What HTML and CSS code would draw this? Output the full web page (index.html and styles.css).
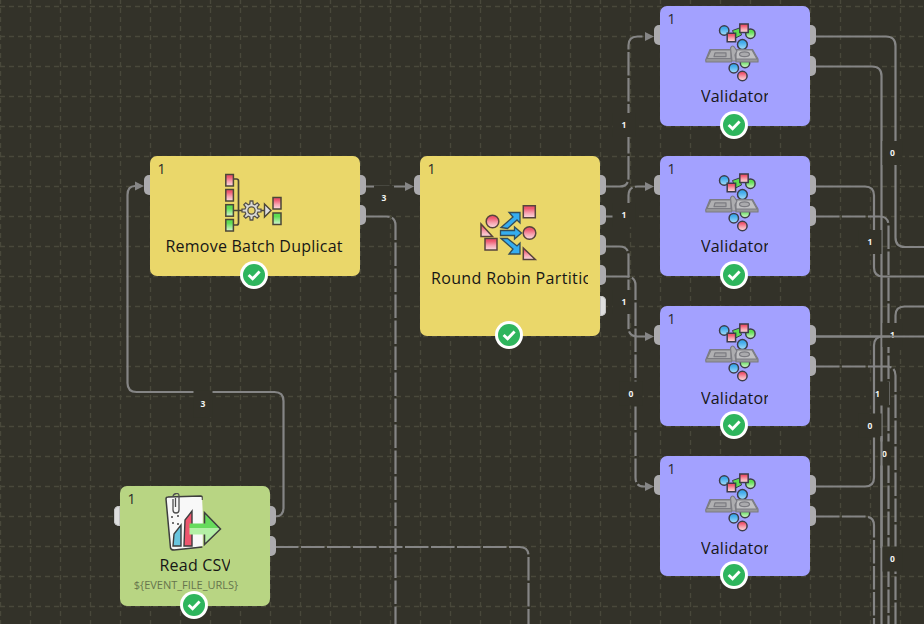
FILE: index.html
```
<!DOCTYPE html>
<html lang="en">
<head>
<meta charset="utf-8">
<title>Data flow graph</title>
<link rel="stylesheet" href="styles.css">
</head>
<body>
<main class="canvas" id="canvas">
<svg class="defs" width="0" height="0" aria-hidden="true">
<defs>
<linearGradient id="red" x2="0" y2="1"><stop offset=".2" stop-color="#ee566e"/><stop offset=".6" stop-color="#f7a3b0"/><stop offset="1" stop-color="#fbdde0"/></linearGradient>
<linearGradient id="green" x2="0" y2="1"><stop offset=".3" stop-color="#5ddd52"/><stop offset="1" stop-color="#d8f5d4"/></linearGradient>
<linearGradient id="blue" x2="0" y2="1"><stop offset=".25" stop-color="#3ea9ea"/><stop offset="1" stop-color="#a5defa"/></linearGradient>
<linearGradient id="arrow" x2="0" y2="1"><stop offset=".5" stop-color="#67db5c"/><stop offset=".5" stop-color="#b4f0a6"/></linearGradient>
<marker id="head" markerUnits="userSpaceOnUse" markerWidth="10" markerHeight="10" refX="0" refY="5" orient="auto"><path d="M0 .5L9 5L0 9.500z" fill="#858585"/></marker>
</defs>
<symbol id="validate" viewBox="0 0 54 60">
<g stroke="#3d3d48" stroke-width="1.5">
<circle cx="19.2" cy="8.500" r="4.700" fill="url(#blue)"/><path d="M27.500 8.500l7-2.500 2 7-6 3z" fill="#5ddd52" stroke-width="1"/><circle cx="45.400" cy="11.700" r="4.700" fill="url(#green)"/>
<path d="M34.800 2h8.400v8.400h-8.400z" fill="url(#red)"/><path d="M22.200 11.300h8.400v8.400h-8.400z" fill="url(#red)"/>
<circle cx="37.400" cy="22.500" r="4.900" fill="url(#blue)"/><circle cx="40" cy="41" r="4.700" fill="url(#green)"/><circle cx="28.800" cy="46.200" r="4.700" fill="url(#blue)"/><circle cx="37.400" cy="54" r="4.700" fill="url(#red)"/></g>
<g stroke="#7c7c82" stroke-width="1.200" stroke-linejoin="round"><path d="M5 27.500h21.500V40H1l-.3-2z" fill="#97979a"/><path d="M6 28h20v8.500H2z" fill="#b0b0b2"/><path d="M10 30.800h11v3.800H9z" fill="#a4a4a6"/><path d="M30 27.500h17.500L53 37v3H31z" fill="#97979a"/><path d="M31 28h16l5 9H31z" fill="#c0c0c2"/><ellipse cx="39.500" cy="32.300" rx="5" ry="2.400" fill="#aaaaad"/><path d="M25.500 26q2-4 4.500 0l2 3-2 4 1 6h-4z" fill="#acacaf"/></g>
</symbol>
<symbol id="dedup" viewBox="0 0 60 60">
<g fill="none" stroke="#4b4637" stroke-width="1.700"><path d="M9 6h3.500q2 0 2 2v42q0 2-2 2H9M9 37.500h32"/></g>
<g stroke="#4b4637" stroke-width="1.500" fill="url(#red)"><rect x="1.800" y="1.500" width="7.600" height="11.500"/><rect x="1.800" y="16.500" width="7.600" height="11.500"/><rect x="49" y="24.500" width="8" height="11.500"/></g>
<g stroke="#4b4637" stroke-width="1.500" fill="url(#green)"><rect x="1.800" y="31.700" width="7.600" height="11.500"/><rect x="1.800" y="46.500" width="7.600" height="11.500"/><rect x="49" y="40" width="8" height="11.500"/></g>
<path id="gear" fill="#dadad6" stroke="#555047" stroke-width="1.300" d=""/>
<circle cx="27.500" cy="37.500" r="3.600" fill="#ead76a" stroke="#555047" stroke-width="1.300"/>
<path d="M40.500 31l6.500 6.500l-6.500 6.500z" fill="#dddde1" stroke="#4b4637" stroke-width="1.400"/>
</symbol>
<symbol id="partition" viewBox="0 0 60 60">
<g stroke="#57433c" stroke-width="1.500" fill="url(#red)"><circle cx="12.500" cy="18.500" r="6.300"/><path d="M1 21v12.500h11.500z"/><path d="M5 35.500h12v11.500H5z"/><path d="M43.300 2.800h12v12h-12z"/><path d="M43.300 45v11.500h12z"/><circle cx="49.500" cy="30" r="6.300"/></g>
<g fill="#35adf0" stroke="#344d59" stroke-width="1.300"><path d="M20.500 27.500h14v-3.500l7 6-7 6v-3.500h-14z"/><path d="M21 24.500L33 14l-4-4.500h11V20l-3-3-9.500 8.500z"/><path d="M21 35.500L33 46l-4 5h11V40l-3 3-9.500-7.500z"/></g>
</symbol>
<symbol id="reader" viewBox="0 0 58 60">
<path d="M2 6q0-2 2-2l34-1 3 50-31 4q-3 0-3.500-2z" fill="#f8f8f8"/>
<path d="M38.500 7V5q0-2-2-2L4 4Q2 4 2 6l4.500 49q.5 2 3.500 2l28.500-3" fill="none" stroke="#3e3e3e" stroke-width="1.500"/>
<path d="M40 3v53" stroke="#b8d583" stroke-width="2.500"/>
<path d="M9 53l1-12 7-9v21z" fill="#69c5df" stroke="#3e3e3e" stroke-width="1.400"/><path d="M20 53l1-26 7-9v35z" fill="#ee566e" stroke="#3e3e3e" stroke-width="1.400"/>
<path d="M25.500 30.500h15V19.500L56.500 36 40.500 51.500V41.500H25.500z" fill="url(#arrow)"/><path d="M40.500 30.500V19.500L56.500 36 40.500 51.500V41.500" fill="none" stroke="#3e3e3e" stroke-width="1.500"/>
<path d="M9 6v11q0 3 3 3t3-3V3q0-3-3-2.500T9 4M11.500 5v9" fill="none" stroke="#4e4e4e" stroke-width="1.300"/>
<path d="M7 24h2m4 -1h2m-7 7h2m3 1h2" stroke="#444" stroke-width="1.500"/>
</symbol>
<symbol id="ok" viewBox="0 0 28 28"><circle cx="14" cy="14" r="14" fill="#fff"/><circle cx="14" cy="14" r="11" fill="#2eb55d"/><path d="M8.600 14l4 3.800 7-7.200" fill="none" stroke="#fff" stroke-width="2.900"/></symbol>
</svg>
<svg class="wires" viewBox="0 0 924 624" id="wires"></svg>
</main>
<script src="graph.js"></script>
</body>
</html>
```
FILE: styles.css
```
body { margin: 0; }
.canvas { position: relative; width: 924px; height: 624px; overflow: hidden; background: #333229; font-family: "Open Sans", "Noto Sans", sans-serif; }
.defs { position: absolute; }
.wires { position: absolute; width: 924px; height: 624px; }
.grid { stroke: #49483b; stroke-width: 1.4; stroke-dasharray: 5 4; fill: none; }
.wire { stroke: #858585; stroke-width: 2.2; fill: none; }
.mask { fill: #333229; }
.count { fill: #f2f2f2; font: 700 8.5px "Open Sans", sans-serif; text-anchor: middle; }
.node { position: absolute; box-sizing: border-box; border-radius: 7px; display: flex; flex-direction: column; align-items: center; color: #161616; }
.validator { background: #a3a1ff; }
.yellow { background: #ead76a; }
.green { background: #b8d583; }
.phase { position: absolute; left: 8px; top: 4px; font-size: 14px; line-height: 18px; color: #292929; }
.icon { display: block; flex: none; }
.validator .icon { width: 54px; height: 60px; margin-top: 16px; margin-left: -6px; }
.dedup .icon { width: 60px; height: 60px; margin-top: 17px; margin-left: -2px; }
.partition .icon { width: 60px; height: 60px; margin-top: 47px; margin-left: 0; }
.reader .icon { width: 58px; height: 60px; margin-top: 7px; margin-left: -4px; }
.title { font-size: 16px; line-height: 22px; letter-spacing: .22px; white-space: nowrap; overflow: hidden; margin-top: 3px; }
.dedup .title { margin-top: 2px; }
.validator.low .title { margin-top: 5px; }
.partition .title { margin-top: 4px; letter-spacing: .35px; }
.reader .title { margin-top: 1px; }
.sub { font-size: 11px; line-height: 16px; color: #66744c; white-space: nowrap; margin-top: 1px; margin-left: -17px; }
.ok { position: absolute; width: 28px; height: 28px; bottom: -13px; left: calc(50% - 15px); }
.port { position: absolute; width: 6px; height: 20px; background: #acabae; }
.port.in { left: -6px; border-radius: 5px 0 0 5px; }
.port.out { right: -6px; border-radius: 0 5px 5px 0; }
.port.free { background: #dedede; box-shadow: inset 0 0 0 1px #c3c3c3; }
```
FILE: graph.js
```
const nodes = [
  { kind: 'yellow dedup', icon: 'dedup', title: 'Remove Batch Duplicat', tw: 178, x: 149.5, y: 156, w: 210, h: 120, ins: [19.4], outs: [19.4, 49.4] },
  { kind: 'yellow partition', icon: 'partition', title: 'Round Robin Partitio', tw: 157, x: 419.5, y: 156, w: 180, h: 180, ins: [19.4], outs: [19.4, 49.4, 79.4, 109.4, 139.6], free: 139.6 },
  { kind: 'green reader', icon: 'reader', title: 'Read CSV', tw: 70, sub: '${EVENT_FILE_URLS}', x: 119.5, y: 486, w: 150, h: 120, ins: [19.6], freeIn: true, outs: [19.6, 49.6] }
];
for (const y of [6, 156, 306, 456]) {
  nodes.push({ kind: y > 300 ? 'validator low' : 'validator', icon: 'validate', title: 'Validator', tw: 67, x: 659.5, y, w: 150, h: 120, ins: [19.4], outs: [19.4, 49.6] });
}

// Gear outline: eight teeth around the hub
const teeth = [];
for (let i = 0; i < 8; i++) {
  for (const [r, a] of [[6.6, -15], [9.6, -8], [9.6, 8], [6.6, 15]]) {
    const t = (i * 45 + a) * Math.PI / 180;
    teeth.push(`${(27.5 + r * Math.cos(t)).toFixed(2)} ${(37.5 + r * Math.sin(t)).toFixed(2)}`);
  }
}
document.getElementById('gear').setAttribute('d', 'M' + teeth.join('L') + 'z');

let svg = '';
for (let x = 0; x <= 924; x += 30) svg += `<path class="grid" d="M${x + .5} -1V624"/>`;
for (let y = 6.5; y <= 624; y += 30) svg += `<path class="grid" d="M0 ${y}H924"/>`;

const wire = (d, dash, arrow) => {
  svg += `<path class="wire" d="${d}"${dash ? ` stroke-dasharray="23.500 2.500"` : ''}${arrow ? ' marker-end="url(#head)"' : ''}/>`;
};
const label = (x, y, n, h = 24, w = 23) => {
  svg += `<rect class="mask" x="${x - w / 2}" y="${y - h / 2}" width="${w}" height="${h}"/><text class="count" x="${x}" y="${y + 3}">${n}</text>`;
};
wire('M275 516.500Q283.500 516.500 283.500 508V401Q283.500 392 274.500 392H136.500Q127.500 392 127.500 383V195Q127.500 186 135 186', false, true);
label(203, 404, 3, 27, 19);
wire('M275 547H519.500Q528.500 547 528.500 556V624', true);
wire('M366 186.500H405', true, true);
label(384, 198, 3, 25, 20);
wire('M366 216.500H386.500Q395.500 216.500 395.500 225.500V624', true);
wire('M606 186.500H619.500Q628.500 186.500 628.500 177.500V45.500Q628.500 36.500 637.500 36.500H645', true, true);
label(624, 125, 1);
wire('M606 216.500H619.500Q628.500 216.500 628.500 207.500V195.500Q628.500 186.500 637.500 186.500H645', true, true);
label(624, 215, 1);
wire('M606 246.500H619.500Q628.500 246.500 628.500 255.500V327.500Q628.500 336.500 637.500 336.500H645', true, true);
label(624, 302, 1);
wire('M606 276.500H626Q635.500 276.500 635.500 285.500V477.500Q635.500 486.500 644 486.500H645', true, true);
label(631, 393.5, 0);
wire('M816 66.500H872Q881.500 66.500 881.500 76V624');
wire('M816 36.500H886Q895.500 36.500 895.500 46V237.500Q895.500 247 905 247H924');
label(892.5, 153, 0, 24, 20);
wire('M816 216.500H879.500Q888.500 216.500 888.500 225.500V624', true);
wire('M816 366.500H886.500Q895.500 366.500 895.500 375.500V624', true);
wire('M816 186.500H865Q874 186.500 874 195.500V267.500Q874 276.500 883 276.500H924');
label(870, 242, 1);
wire('M816 336.500H886.500Q895.500 336.500 895.500 327.500V315.500Q895.500 306.500 904.500 306.500H924');
label(892.5, 335, 1, 24, 20);
label(877.5, 393.5, 1);
wire('M816 486.500H865Q874 486.500 874 477.500V345.500Q874 336.500 883 336.500H924');
wire('M816 336.500H890');
label(870, 425.5, 0);
label(884.5, 453.5, 0, 24, 12);
wire('M881.500 436V548');
label(892.5, 559, 0, 25, 20);
wire('M816 516.500H865Q874 516.500 874 525.500V624', true);
document.getElementById('wires').innerHTML = svg;

const canvas = document.getElementById('canvas');
for (const n of nodes) {
  const el = document.createElement('section');
  el.className = 'node ' + n.kind;
  el.style.cssText = `left:${n.x}px;top:${n.y}px;width:${n.w}px;height:${n.h}px`;
  el.innerHTML = `<span class="phase">1</span>`
    + n.ins.map(y => `<i class="port in${n.freeIn ? ' free' : ''}" style="top:${y}px"></i>`).join('')
    + n.outs.map(y => `<i class="port out${n.free === y ? ' free' : ''}" style="top:${y}px"></i>`).join('')
    + `<svg class="icon"><use href="#${n.icon}"/></svg><div class="title" style="width:${n.tw}px">${n.title}</div>`
    + (n.sub ? `<div class="sub">${n.sub}</div>` : '')
    + `<svg class="ok"><use href="#ok"/></svg>`;
  canvas.appendChild(el);
}
```
